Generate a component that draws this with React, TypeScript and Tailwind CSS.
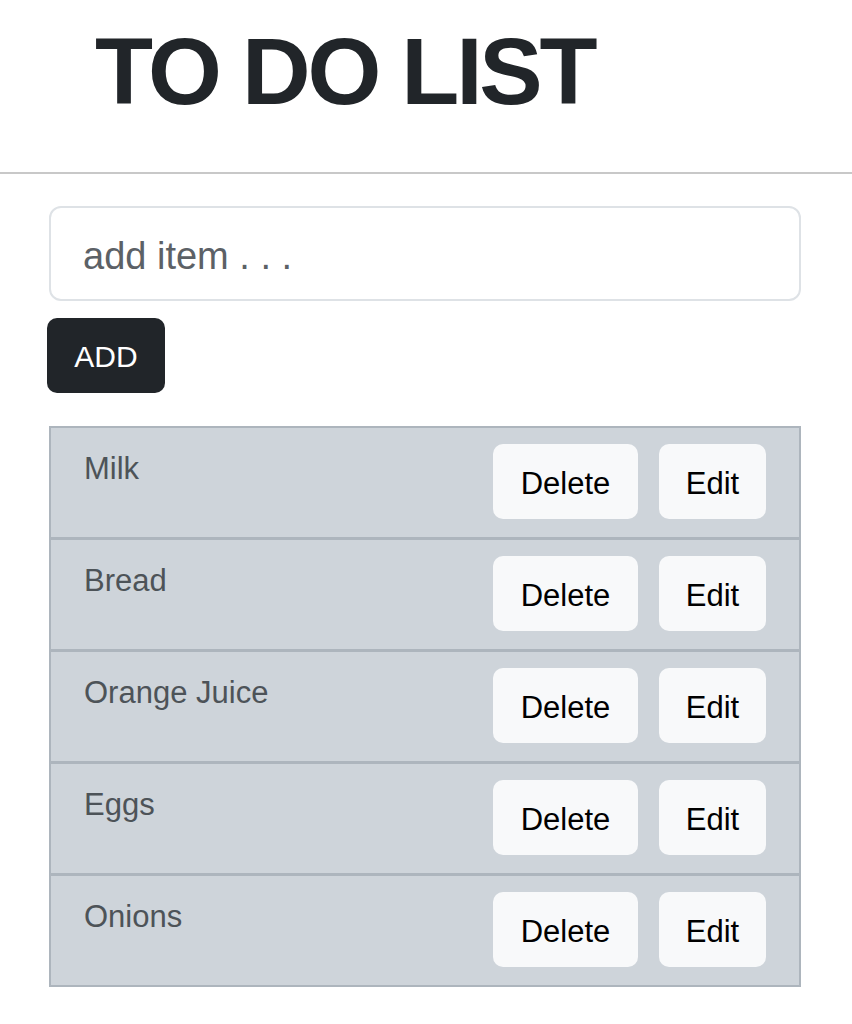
import { useState } from "react";

const initialItems = ["Milk", "Bread", "Orange Juice", "Eggs", "Onions"];

function TodoRow({ label, last }: { label: string; last: boolean }) {
  return (
    <li
      className={`flex items-start justify-between bg-[#ced4da] pl-[33px] pr-[33px] pt-[16px] ${
        last ? "h-[109px]" : "h-[112px] border-b-[3px] border-[#adb5bd]"
      }`}
    >
      <span className="mt-[2px] text-[31px] leading-[1.5] text-[#4d5358]">{label}</span>
      <div className="flex gap-[21px]">
        <button className="h-[75px] w-[145px] rounded-[10px] bg-[#f8f9fa] pt-[6px] text-[31px] text-black">
          Delete
        </button>
        <button className="h-[75px] w-[107px] rounded-[10px] bg-[#f8f9fa] pt-[6px] text-[31px] text-black">
          Edit
        </button>
      </div>
    </li>
  );
}

export default function App() {
  const [items] = useState(initialItems);

  return (
    <div className="min-h-screen bg-white font-['Liberation_Sans',Arial,sans-serif]">
      <header className="h-[174px] border-b-2 border-[#c8c8c8] pl-[95px] pt-[24px]">
        <h1 className="text-[95px] font-bold leading-none tracking-[-3.2px] text-[#212529]">
          TO DO LIST
        </h1>
      </header>

      <main className="ml-[49px] w-[752px] pt-[32px]">
        <input
          type="text"
          placeholder="add item . . ."
          className="h-[95px] w-full rounded-[12px] border-2 border-[#dee2e6] bg-white px-[32px] pt-[5px] text-[38px] text-[#212529] outline-none placeholder:text-[#5c6166]"
        />
        <button className="-ml-[2px] mt-[17px] h-[75px] w-[118px] rounded-[10px] bg-[#212529] pt-[2px] text-[30px] text-white">
          ADD
        </button>

        <ul className="mt-[33px] border-2 border-[#adb5bd]">
          {items.map((item, i) => (
            <TodoRow key={item} label={item} last={i === items.length - 1} />
          ))}
        </ul>
      </main>
    </div>
  );
}
